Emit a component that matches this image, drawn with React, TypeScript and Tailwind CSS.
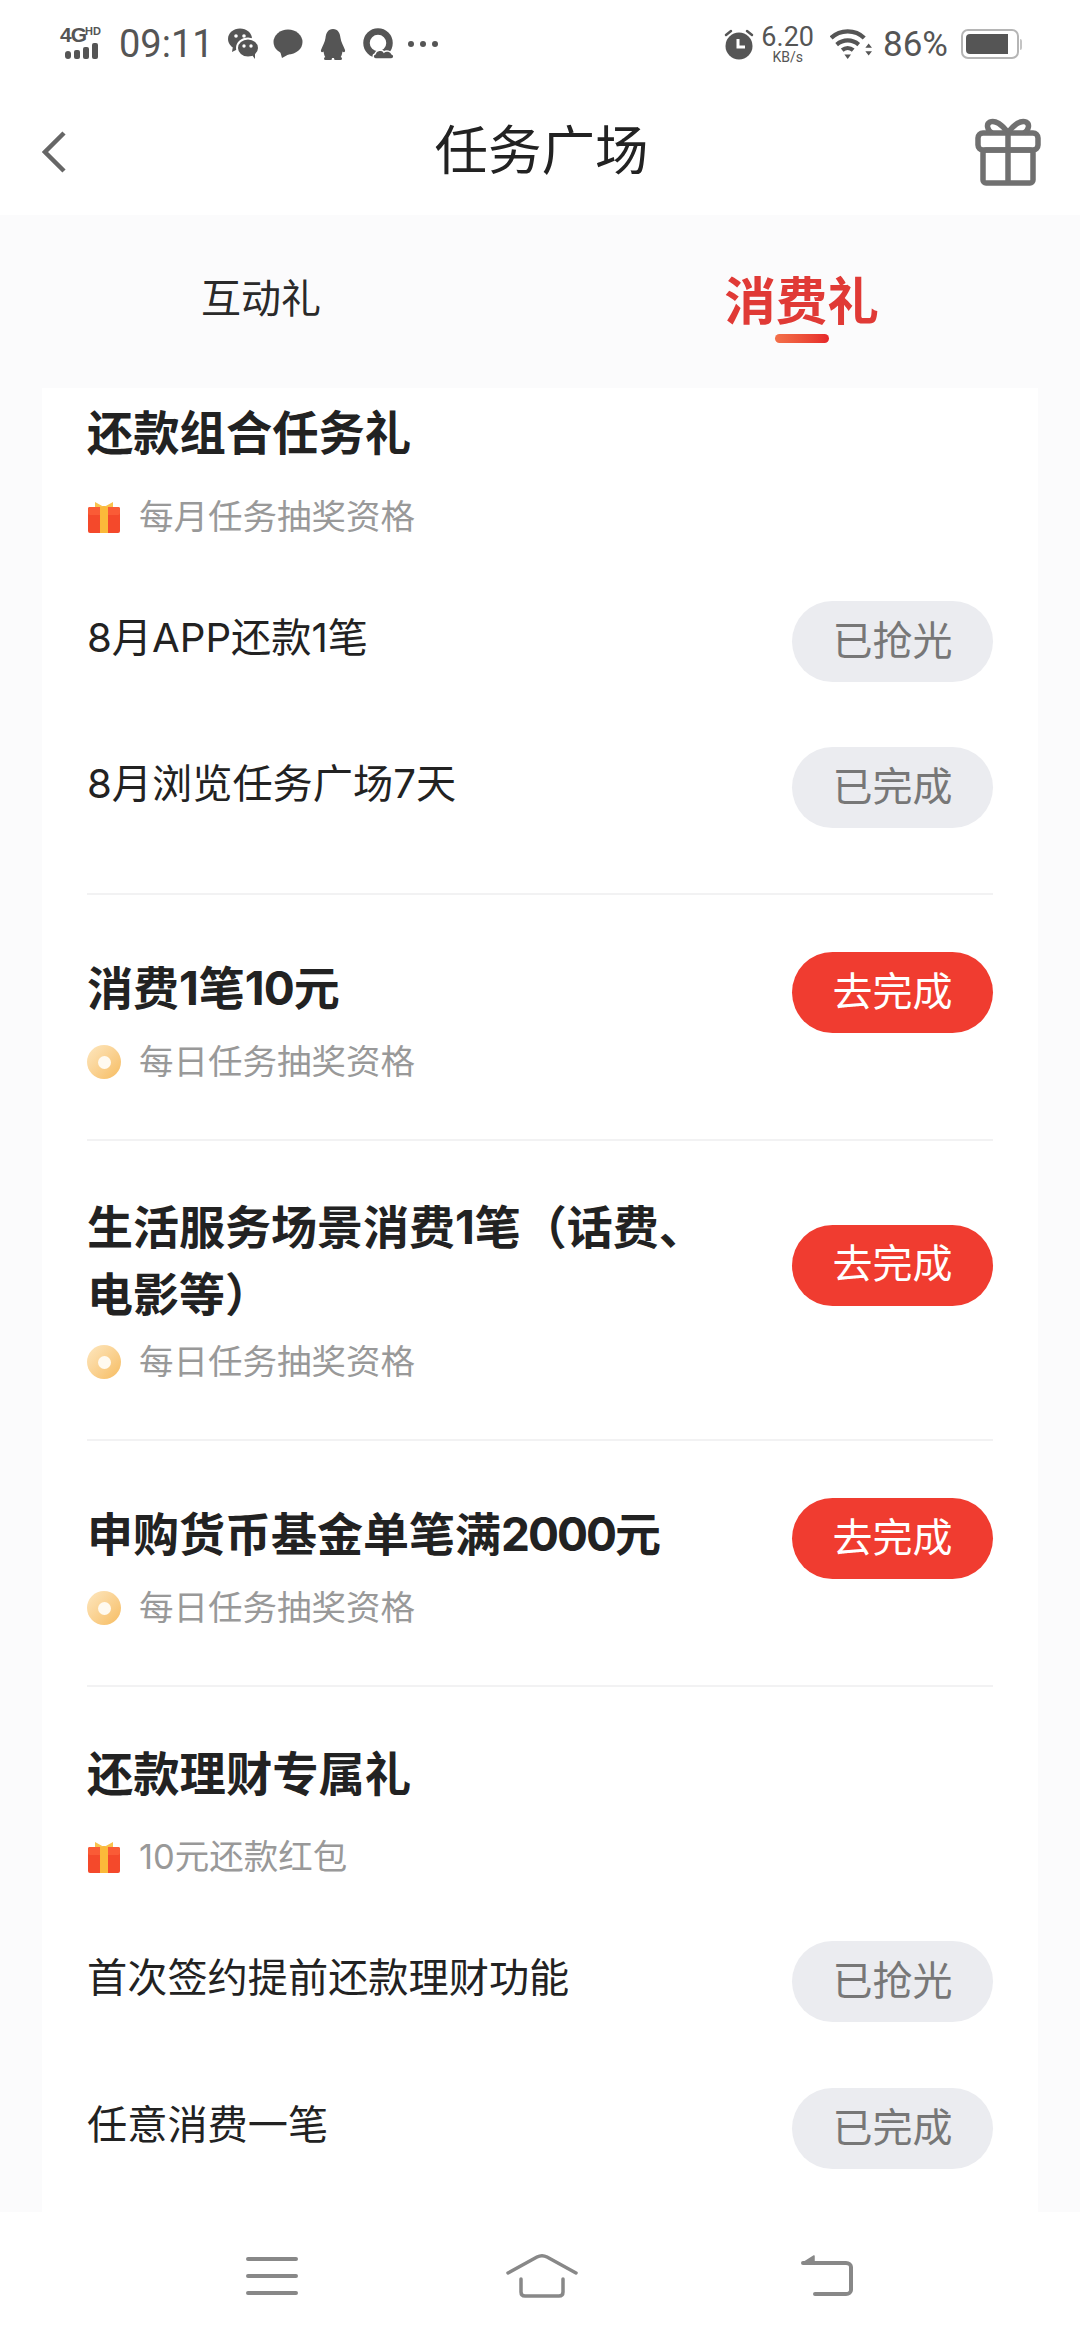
const SANS = "font-['Inter','Noto_Sans_CJK_SC',sans-serif]";

function SignalIcon() {
  return (
    <div className="relative h-[32px] w-[46px] text-[#555]">
      <span className="absolute left-0 top-[-3px] font-['Liberation_Sans',sans-serif] text-[21px] leading-[20px] font-bold tracking-[-1px]">4G</span>
      <span className="absolute left-[25px] top-[-3px] font-['Liberation_Sans',sans-serif] text-[11px] leading-[12px] font-bold">HD</span>
      <svg className="absolute left-[4px] top-[14px]" width="36" height="18" viewBox="0 0 36 18" fill="#555">
        <rect x="1" y="9" width="6" height="8" rx="3" />
        <rect x="10" y="8" width="6" height="9" rx="2" />
        <rect x="19" y="5" width="6" height="12" rx="2" />
        <rect x="28" y="1" width="6" height="16" rx="2" />
      </svg>
    </div>
  );
}

function WechatIcon() {
  return (
    <svg width="30" height="32" viewBox="0 0 30 32">
      <ellipse cx="12" cy="11" rx="12" ry="10.5" fill="#555" />
      <path d="M5 18l-1 6 6-3z" fill="#555" />
      <circle cx="8" cy="8" r="1.8" fill="#fff" />
      <circle cx="16" cy="8" r="1.8" fill="#fff" />
      <ellipse cx="20" cy="20" rx="11" ry="9.5" fill="#555" stroke="#fff" strokeWidth="2" />
      <path d="M24 27l3 4 0-6z" fill="#555" />
      <circle cx="16" cy="18" r="1.7" fill="#fff" />
      <circle cx="23" cy="18" r="1.7" fill="#fff" />
    </svg>
  );
}

function BubbleIcon() {
  return (
    <svg width="30" height="30" viewBox="0 0 30 30" fill="#555">
      <ellipse cx="15" cy="13" rx="14.5" ry="12.5" />
      <path d="M7 22l2 7 9-5z" />
    </svg>
  );
}

function QqIcon() {
  return (
    <svg width="26" height="31" viewBox="0 0 26 31" fill="#555">
      <path d="M13 0c5 0 7 4 7.500 9 .5 4 3 8 4.500 12 .5 2-1 3-2.500 1.500C22 26 21 28 20 29h-14c-1-1-2-3-2.500-6.500C2 24 .5 23 1 21c1.500-4 4-8 4.500-12C6 4 8 0 13 0z" />
      <rect x="4" y="28" width="8" height="3" rx="1.500" />
      <rect x="14" y="28" width="8" height="3" rx="1.500" />
    </svg>
  );
}

function QCloudIcon() {
  return (
    <svg width="32" height="32" viewBox="0 0 32 32">
      <circle cx="15" cy="15" r="11.500" fill="none" stroke="#555" strokeWidth="6.500" />
      <path d="M13 31c-3 0-4-4-1-5 1-4 7-5 9-2 2-2 7-1 8 2 3 1 2 5-1 5z" fill="#555" stroke="#fff" strokeWidth="1.500" />
    </svg>
  );
}

function AlarmIcon() {
  return (
    <svg width="30" height="32" viewBox="0 0 30 32">
      <circle cx="15" cy="18" r="13.500" fill="#555" />
      <path d="M2 7l5-4M28 7l-5-4" stroke="#555" strokeWidth="2.500" strokeLinecap="round" />
      <path d="M14 11v8h7" fill="none" stroke="#fff" strokeWidth="3" />
    </svg>
  );
}

function WifiIcon() {
  return (
    <svg width="42" height="32" viewBox="0 0 38 29" fill="none" stroke="#555" strokeWidth="3.800">
      <path d="M1 9c8-8 22-8 30 0" />
      <path d="M6 15c6-5 14-5 20 0" />
      <path d="M11 20c3-2.500 7-2.500 10 0" />
      <path d="M13 24h6l-3 4z" fill="#555" stroke="none" />
      <path d="M32 18h6l-3-4zM32 21h6l-3 4z" fill="#555" stroke="none" />
    </svg>
  );
}

function BatteryIcon() {
  return (
    <div className="flex items-center">
      <div className="h-[30px] w-[58px] rounded-[7px] border-2 border-[#b5b5b5] p-[3px]">
        <div className="h-full w-[42px] rounded-l-[4px] bg-[#555]" />
      </div>
      <div className="ml-[1px] h-[11px] w-[2px] rounded-r-sm bg-[#c4c4c4]" />
    </div>
  );
}

function StatusBar() {
  return (
    <div className="flex h-[86px] shrink-0 items-center pl-[60px] pr-[58px] pt-[2px] text-[#555]">
      <SignalIcon />
      <span className="ml-[13px] font-['Roboto',sans-serif] text-[38px] leading-none">09:11</span>
      <div className="ml-[14px]"><WechatIcon /></div>
      <div className="ml-[15px]"><BubbleIcon /></div>
      <div className="ml-[17px]"><QqIcon /></div>
      <div className="ml-[17px]"><QCloudIcon /></div>
      <div className="ml-[13px] flex gap-[6px]">
        <span className="h-[6px] w-[6px] rounded-full bg-[#555]" />
        <span className="h-[6px] w-[6px] rounded-full bg-[#555]" />
        <span className="h-[6px] w-[6px] rounded-full bg-[#555]" />
      </div>
      <div className="ml-auto"><AlarmIcon /></div>
      <div className="ml-[7px] flex flex-col items-center font-['Roboto',sans-serif]">
        <span className="text-[27px] leading-[25px]">6.20</span>
        <span className="text-[14px] leading-[14px]">KB/s</span>
      </div>
      <div className="ml-[16px]"><WifiIcon /></div>
      <span className="ml-[11px] font-['Roboto',sans-serif] text-[35px] leading-none">86%</span>
      <div className="ml-[13px]"><BatteryIcon /></div>
    </div>
  );
}

function TopGift() {
  return (
    <svg width="66" height="68" viewBox="0 0 66 68" fill="none" stroke="#707070" strokeWidth="5.500" strokeLinejoin="round">
      <rect x="3" y="15" width="60" height="17" rx="5" />
      <rect x="8" y="32" width="50" height="33" rx="3" />
      <path d="M33 15v50" />
      <path d="M33 15C27 6 20 2 15 4c-4 2-3 8 2 11" />
      <path d="M33 15C39 6 46 2 51 4c4 2 3 8-2 11" />
    </svg>
  );
}

function Header() {
  return (
    <div className="grid h-[129px] shrink-0 grid-cols-[1fr_auto_1fr] items-center bg-white pl-[42px] pr-[39px]">
      <svg className="mt-[3px]" width="24" height="42" viewBox="0 0 24 42" fill="none" stroke="#666" strokeWidth="4.500">
        <path d="M22 2L3 21l19 19" />
      </svg>
      <span className="text-[53.5px] leading-[64px] text-[#222]">任务广场</span>
      <div className="mt-[3px] justify-self-end"><TopGift /></div>
    </div>
  );
}

function Tabs() {
  return (
    <div className="grid h-[173px] shrink-0 grid-cols-2 bg-[#fbfbfc]">
      <div className="flex items-start justify-center pt-[54px]">
        <span className="mr-[18px] text-[40px] leading-[60px] text-[#2a2a2a]">互动礼</span>
      </div>
      <div className="flex flex-col items-center pr-[17px] pt-[54px]">
        <span className="text-[51.5px] leading-[64px] font-bold text-[#e03a36]">消费礼</span>
        <span className="mt-[1px] h-[9px] w-[54px] rounded-full bg-gradient-to-r from-[#f3704a] to-[#e6262a]" />
      </div>
    </div>
  );
}

function SmallGift() {
  return (
    <svg width="34" height="32" viewBox="0 0 34 32" className="shrink-0">
      <rect x="1" y="6" width="32" height="26" rx="2" fill="#f4492b" />
      <rect x="1" y="6" width="32" height="8" rx="2" fill="#fa5b36" />
      <rect x="13" y="5" width="8" height="27" fill="#fbb93a" />
      <path d="M8 1l9 5 9-5v5H8z" fill="#f9c24d" />
    </svg>
  );
}

function CoinIcon() {
  return (
    <div className="flex h-[34px] w-[34px] shrink-0 items-center justify-center rounded-full bg-gradient-to-br from-[#fde7bf] to-[#f6bc5f]">
      <div className="h-[13px] w-[13px] rounded-full bg-[#fffaf0]" />
    </div>
  );
}

function Sub({ icon, text, className }: { icon: "gift" | "coin"; text: string; className: string }) {
  return (
    <div className={`flex h-[48px] items-center ${className}`}>
      {icon === "gift" ? <SmallGift /> : <CoinIcon />}
      <span className="ml-[18px] text-[34.5px] leading-[48px] text-[#999]">{text}</span>
    </div>
  );
}

function Pill({ label, active }: { label: string; active?: boolean }) {
  return (
    <div className={`flex h-[81px] w-[201px] shrink-0 items-center justify-center rounded-full pb-[2px] text-[40px] ${active ? "bg-[#f03c30] text-white" : "bg-[#ebecf0] text-[#777]"}`}>
      {label}
    </div>
  );
}

function Row({ text, label, className }: { text: string; label: string; className: string }) {
  return (
    <div className={`flex items-center justify-between ${className}`}>
      <span className="pb-[8px] text-[40.2px] leading-[60px] text-[#222]">{text}</span>
      <Pill label={label} />
    </div>
  );
}

function Title({ children }: { children: React.ReactNode }) {
  return <div className="-mt-[1px] pb-[1px] text-[46.3px] leading-[60px] font-bold text-[#222]">{children}</div>;
}

function TaskItem({ title, padTop, subGap }: { title: React.ReactNode; padTop: string; subGap: string }) {
  return (
    <div className={`border-b-2 border-[#f2f2f3] pb-[53px] ${padTop}`}>
      <div className="flex items-center justify-between">
        <div className="w-[640px] pb-[8px] text-[46px] leading-[67px] font-bold text-[#222]">{title}</div>
        <Pill label="去完成" active />
      </div>
      <Sub icon="coin" text="每日任务抽奖资格" className={subGap} />
    </div>
  );
}

function Card() {
  return (
    <div className="mx-[42px] min-h-0 flex-1 overflow-hidden bg-white px-[45px] pt-[16px]">
      <div className="border-b-2 border-[#f2f2f3] pb-[65px]">
        <Title>还款组合任务礼</Title>
        <Sub icon="gift" text="每月任务抽奖资格" className="mt-[29px]" />
        <Row text="8月APP还款1笔" label="已抢光" className="mt-[60px]" />
        <Row text="8月浏览任务广场7天" label="已完成" className="mt-[65px]" />
      </div>
      <TaskItem title={<>消费1笔<span className="tracking-[-1px]">10</span>元</>} padTop="pt-[57px]" subGap="mt-[5px]" />
      <TaskItem title={<>生活服务场景消费1笔（话费、<br />电影等）</>} padTop="pt-[53px]" subGap="mt-[2px]" />
      <TaskItem title={<>申购货币基金单笔满<span className="tracking-[-2px]">2000</span>元</>} padTop="pt-[57px]" subGap="mt-[5px]" />
      <div className="pt-[58px]">
        <Title>还款理财专属礼</Title>
        <Sub icon="gift" text="10元还款红包" className="mt-[28px]" />
        <Row text="首次签约提前还款理财功能" label="已抢光" className="mt-[60px]" />
        <Row text="任意消费一笔" label="已完成" className="mt-[66px]" />
      </div>
    </div>
  );
}

function BottomNav() {
  return (
    <div className="flex h-[128px] shrink-0 items-center bg-white pl-[246px]">
      <svg width="52" height="40" viewBox="0 0 52 40" stroke="#888" strokeWidth="4" strokeLinecap="round">
        <path d="M2 3h48M2 20h48M2 37h48" />
      </svg>
      <svg width="72" height="46" viewBox="0 0 72 46" fill="none" stroke="#888" strokeWidth="3.500" strokeLinecap="round" strokeLinejoin="round" className="ml-[208px]">
        <path d="M2 20L31 4c3-1.600 7-1.600 10 0l29 16" />
        <path d="M15 26v13c0 3 2 4 4 4h34c2 0 4-1 4-4V26" />
      </svg>
      <svg width="54" height="44" viewBox="0 0 54 44" fill="none" stroke="#888" strokeWidth="4" strokeLinecap="round" strokeLinejoin="round" className="ml-[222px]">
        <path d="M3 9h43c3 0 5 2 5 4v23c0 2-2 4-5 4H15" />
        <path d="M3 9l11-7v8z" fill="#888" strokeWidth="1.500" />
      </svg>
    </div>
  );
}

export default function App() {
  return (
    <div className={`flex h-[2340px] w-[1080px] flex-col overflow-hidden bg-[#fbfbfc] ${SANS}`}>
      <div className="bg-white">
        <StatusBar />
      </div>
      <Header />
      <Tabs />
      <Card />
      <BottomNav />
    </div>
  );
}
